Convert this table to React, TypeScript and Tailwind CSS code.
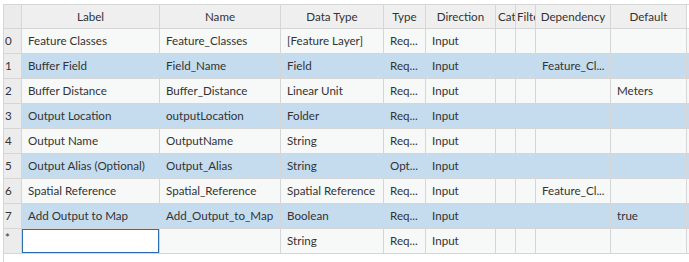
import React from "react";

interface Param {
    label: string;
    name: string;
    dataType: string;
    type: string;
    direction: string;
    dependency: string;
    defaultValue: string;
}

// Type and Dependency hold the text as the grid shows it (cut with "...")
const params: Param[] = [
    { label: "Feature Classes", name: "Feature_Classes", dataType: "[Feature Layer]", type: "Req...", direction: "Input", dependency: "", defaultValue: "" },
    { label: "Buffer Field", name: "Field_Name", dataType: "Field", type: "Req...", direction: "Input", dependency: "Feature_Cl...", defaultValue: "" },
    { label: "Buffer Distance", name: "Buffer_Distance", dataType: "Linear Unit", type: "Req...", direction: "Input", dependency: "", defaultValue: "Meters" },
    { label: "Output Location", name: "outputLocation", dataType: "Folder", type: "Req...", direction: "Input", dependency: "", defaultValue: "" },
    { label: "Output Name", name: "OutputName", dataType: "String", type: "Req...", direction: "Input", dependency: "", defaultValue: "" },
    { label: "Output Alias (Optional)", name: "Output_Alias", dataType: "String", type: "Opt...", direction: "Input", dependency: "", defaultValue: "" },
    { label: "Spatial Reference", name: "Spatial_Reference", dataType: "Spatial Reference", type: "Req...", direction: "Input", dependency: "Feature_Cl...", defaultValue: "" },
    { label: "Add Output to Map", name: "Add_Output_to_Map", dataType: "Boolean", type: "Req...", direction: "Input", dependency: "", defaultValue: "true" },
];

const cols = "grid grid-cols-[18px_138px_121px_103px_42px_70px_20px_20px_75px_76px_2px]";
const cell = "border-r border-b border-[#d6d6d6] overflow-hidden whitespace-nowrap pl-[6px] leading-[24px]";
const headCell = "border-r border-b border-[#d6d6d6] overflow-hidden whitespace-nowrap leading-[23px]";

const ParamTable: React.FC = () => {
    return (
        <div className="w-[689px] h-[262px] bg-white pt-[4px] pl-[3px] text-[11.6px] text-[#333] overflow-hidden" style={{ fontFamily: 'Lato, sans-serif' }}>
            <div className="border-l border-t border-[#d6d6d6] h-[258px]">
                <div className={`${cols} h-[24px] bg-[#efefef]`}>
                    <div className="border-r border-b border-[#d6d6d6] bg-[#ebebeb]" />
                    <div className={`${headCell} text-center`}>Label</div>
                    <div className={`${headCell} text-center`}>Name</div>
                    <div className={`${headCell} text-center`}>Data Type</div>
                    <div className={`${headCell} text-center`}>Type</div>
                    <div className={`${headCell} text-center`}>Direction</div>
                    <div className={`${headCell} pl-[2px]`}>Cat</div>
                    <div className={`${headCell} pl-[1px]`}>Filter</div>
                    <div className={`${headCell} text-center`}>Dependency</div>
                    <div className={`${headCell} text-center`}>Default</div>
                    <div className="border-b border-[#d6d6d6] bg-white" />
                </div>
                {params.map((p, i) => (
                    <div key={p.name} className={`${cols} h-[25px] ${i % 2 === 1 ? "bg-[#c5dcef]" : "bg-[#f7f8f8]"}`}>
                        <div className="border-r border-b border-[#d6d6d6] bg-[#ececec] pl-[1px] leading-[24px]">{i}</div>
                        <div className={cell}>{p.label}</div>
                        <div className={cell}>{p.name}</div>
                        <div className={cell}>{p.dataType}</div>
                        <div className={cell}>{p.type}</div>
                        <div className={cell}>{p.direction}</div>
                        <div className={cell}></div>
                        <div className={cell}></div>
                        <div className={cell}>{p.dependency}</div>
                        <div className={cell}>{p.defaultValue}</div>
                        <div className="border-b border-[#d6d6d6]" />
                    </div>
                ))}
                <div className={`${cols} h-[25px] bg-[#f7f8f8]`}>
                    <div className="border-r border-b border-[#d6d6d6] bg-[#ececec] pl-[1px] leading-[18px]">*</div>
                    <div className="border-r border-b border-[#d6d6d6]">
                        <input className="block w-full h-full bg-white border border-[#2b6cb3] outline-none" readOnly />
                    </div>
                    <div className={cell}></div>
                    <div className={cell}>String</div>
                    <div className={cell}>Req...</div>
                    <div className={cell}>Input</div>
                    <div className={cell}></div>
                    <div className={cell}></div>
                    <div className={cell}></div>
                    <div className={cell}></div>
                    <div className="border-b border-[#d6d6d6]" />
                </div>
            </div>
        </div>
    );
};

export default function App() {
    return <ParamTable />;
}
